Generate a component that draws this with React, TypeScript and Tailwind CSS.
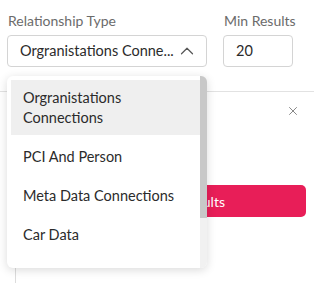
import React from 'react';
import { ChevronUp, X } from 'lucide-react';

const options = ['Orgranistations Connections', 'PCI And Person', 'Meta Data Connections', 'Car Data'];

export default function App() {
  return (
    <div className="relative w-[314px] h-[283px] overflow-hidden bg-white font-['Lato',sans-serif] text-[#333]">
      {/* filter row */}
      <div className="flex gap-4 pl-[7px] pt-[12px]">
        <div className="w-[200px]">
          <label className="block whitespace-nowrap text-[14px] text-[#6b6b6b] leading-[18px] pl-px">Relationship Type</label>
          <div className="mt-[5px] h-[32px] flex items-center justify-between border border-[#d4d4d4] rounded-[4px] pl-[12px] pr-[8px]">
            <span className="whitespace-nowrap text-[14.5px] text-[#2b2b2b]">Orgranistations Conne...</span>
            <ChevronUp className="w-[22px] h-[22px] text-[#555]" strokeWidth={1.3} />
          </div>
        </div>
        <div className="w-[70px]">
          <label className="block whitespace-nowrap text-[14px] text-[#6b6b6b] leading-[18px] pl-px">Min Results</label>
          <div className="mt-[5px] h-[32px] flex items-center border border-[#d4d4d4] rounded-[4px] pl-[12px]">
            <span className="text-[14.5px] text-[#2b2b2b]">20</span>
          </div>
        </div>
      </div>

      <div className="mt-[24px] border-t border-[#e2e2e2]" />

      {/* panel under the dropdown */}
      <div className="ml-[15px] border-l border-[#dcdcdc] h-[200px]">
        <div className="flex justify-end pr-[14px] pt-[12px]">
          <X className="w-[14px] h-[14px] text-[#777]" strokeWidth={1.5} />
        </div>
        <div className="mt-[67px] ml-[8px] mr-[8px] h-[32px] rounded-[5px] bg-[#e81e58] flex items-center justify-end pr-[81px] text-white text-[14px] whitespace-nowrap">
          Search Results
        </div>
      </div>

      {/* dropdown menu */}
      <div className="absolute left-[7px] top-[76px] w-[200px] h-[192px] bg-white rounded-[6px] shadow-[0_2px_10px_rgba(0,0,0,0.15)] flex overflow-hidden">
        <div className="flex-1 pt-[4px] pl-[4px]">
          {options.map((o, i) => (
            <div
              key={o}
              className={`px-[12px] text-[14.5px] text-[#2b2b2b] leading-[20px] ${
                i === 0 ? 'bg-[#efefef] py-[7.5px]' : 'h-[39px] flex items-center'
              } ${i === 1 ? 'mt-[2px]' : ''}`}
            >
              {o}
            </div>
          ))}
        </div>
        <div className="w-[7px] bg-[#f1f1f1]">
          <div className="h-[142px] bg-[#c8c8c8]" />
        </div>
      </div>
    </div>
  );
}
